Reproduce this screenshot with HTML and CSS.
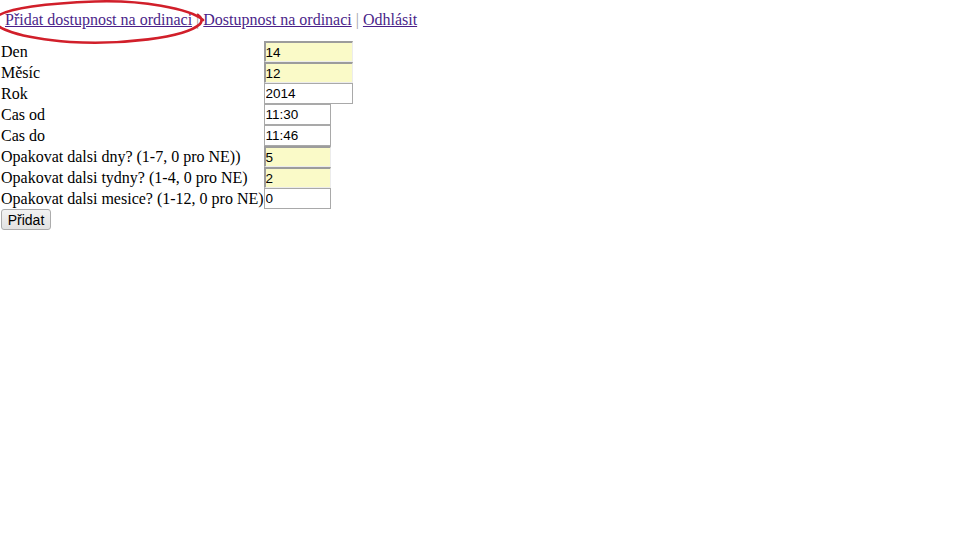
FILE: index.html
```html
<!DOCTYPE html>
<html lang="cs">
<head>
<meta charset="utf-8">
<title>Přidat dostupnost</title>
<link rel="stylesheet" href="styles.css">
</head>
<body>
<div class="nav">
  <a href="#" class="link">Přidat dostupnost na ordinaci</a> <span class="sep">|</span> <a href="#" class="link">Dostupnost na ordinaci</a> <span class="sep">|</span> <a href="#" class="link">Odhlásit</a>
  <svg class="circle" width="210" height="46" viewBox="0 0 210 46" aria-hidden="true">
    <path d="M203 20 C190 8 140 0 95 1.5 C50 3 5 8 -5 18 C-10 28 20 38 70 42 C120 45 185 38 200 24 C203 20 201 17 198 15" fill="none" stroke="#d11f2a" stroke-width="2.6" stroke-linecap="round"/>
  </svg>
</div>
<form class="form">
  <table class="grid">
    <tr><td class="lbl">Den</td><td><input class="in wide auto" value="14"></td></tr>
    <tr><td class="lbl">Měsíc</td><td><input class="in wide auto" value="12"></td></tr>
    <tr><td class="lbl">Rok</td><td><input class="in wide" value="2014"></td></tr>
    <tr><td class="lbl">Cas od</td><td><input class="in narrow" value="11:30"></td></tr>
    <tr><td class="lbl">Cas do</td><td><input class="in narrow" value="11:46"></td></tr>
    <tr><td class="lbl">Opakovat dalsi dny? (1-7, 0 pro NE))</td><td><input class="in narrow auto" value="5"></td></tr>
    <tr><td class="lbl">Opakovat dalsi tydny? (1-4, 0 pro NE)</td><td><input class="in narrow auto" value="2"></td></tr>
    <tr><td class="lbl">Opakovat dalsi mesice? (1-12, 0 pro NE)</td><td><input class="in narrow" value="0"></td></tr>
  </table>
  <button type="button" class="btn">Přidat</button>
</form>
</body>
</html>
```
FILE: styles.css
```css
html, body {
  margin: 0;
  padding: 0;
  background: #ffffff;
}
body {
  font-family: "Liberation Serif", "Times New Roman", serif;
  font-size: 16px;
  color: #000;
}
.nav {
  position: relative;
  padding: 11px 0 12px 5px;
  line-height: 18px;
  height: 18px;
}
.link {
  color: #4b1f8a;
  text-decoration: underline;
}
.sep {
  color: #a0a0a0;
}
.circle {
  position: absolute;
  left: 0;
  top: 0;
  overflow: visible;
  pointer-events: none;
}
.form {
  margin: 0;
}
.grid {
  border-collapse: collapse;
  border-spacing: 0;
}
.grid td {
  padding: 0;
  height: 21px;
  vertical-align: middle;
}
.grid td.lbl {
  padding-left: 1px;
  white-space: nowrap;
  line-height: 18px;
}
.in {
  display: block;
  box-sizing: border-box;
  height: 21px;
  margin: 0;
  padding: 1px 1px;
  font-family: "Liberation Sans", Arial, sans-serif;
  font-size: 13.5px;
  color: #000;
  background: #fff;
  border: 1px solid #a9a9a9;
  outline: none;
}
.wide { width: 89px; }
.narrow { width: 67px; }
.in.auto {
  background: #fafac8;
  border-top: 2px solid #9c9c9c;
  border-left: 2px solid #9c9c9c;
  border-right: 1px solid #ececec;
  border-bottom: 1px solid #ececec;
  padding-left: 0;
}
.btn {
  display: block;
  box-sizing: border-box;
  height: 21px;
  width: 50px;
  margin: 0 0 0 1px;
  padding: 0;
  font-family: "Liberation Sans", Arial, sans-serif;
  font-size: 14px;
  color: #000;
  background: linear-gradient(#f2f2f2, #e2e2e2);
  border: 1px solid #acacac;
  border-radius: 3px;
}
```
